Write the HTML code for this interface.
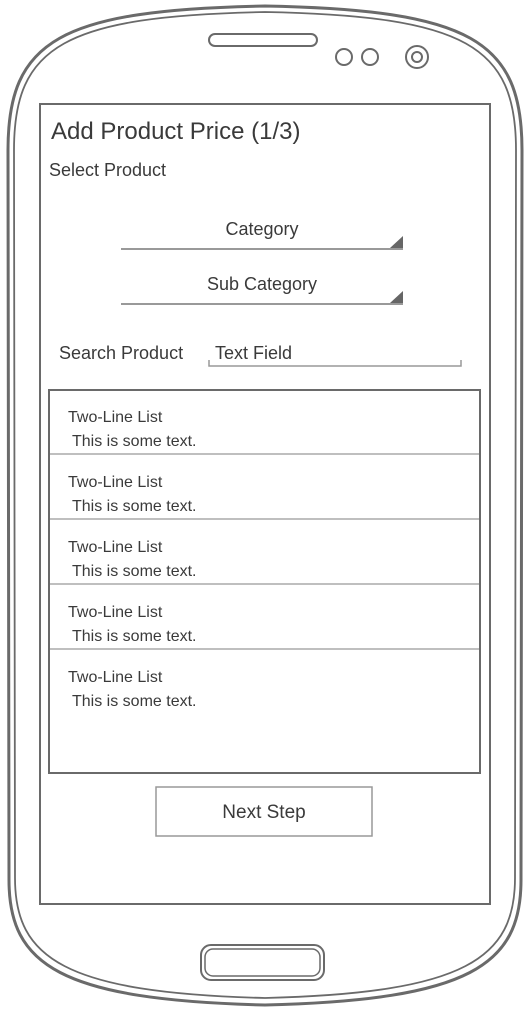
<!DOCTYPE html>
<html><head><meta charset="utf-8"><style>
html,body{margin:0;padding:0;background:#fff;width:530px;height:1010px;overflow:hidden}
svg{display:block}
text{font-family:"Liberation Sans",sans-serif;fill:#3a3a3a}
</style></head><body>
<svg width="530" height="1010" viewBox="0 0 530 1010" xmlns="http://www.w3.org/2000/svg">
<g fill="none" stroke="#6a6a6a">
<path stroke-width="3" d="M8 150 C8 40 60 10 265 6 C470 10 522 40 522 150 L521 880 C521 965 470 1000 265 1005 C60 1000 9 965 9 880 Z"/>
<path stroke-width="1.8" d="M14 150 C14 46 64 16 265 12 C466 16 516 46 516 150 L515 878 C515 958 466 993 265 998 C64 993 15 958 15 878 Z"/>
<rect x="209" y="34" width="108" height="12" rx="6" stroke-width="2"/>
<circle cx="344" cy="57" r="8" stroke-width="2"/>
<circle cx="370" cy="57" r="8" stroke-width="2"/>
<circle cx="417" cy="57" r="11" stroke-width="2"/>
<circle cx="417" cy="57" r="5" stroke-width="2"/>
<rect x="201" y="945" width="123" height="35" rx="10" stroke-width="2"/>
<rect x="205" y="949" width="115" height="27" rx="8" stroke-width="1.5"/>
<rect x="40" y="104" width="450" height="800" stroke-width="2"/>
<line x1="121" y1="249" x2="403" y2="249" stroke="#999" stroke-width="2"/>
<line x1="121" y1="304" x2="403" y2="304" stroke="#999" stroke-width="2"/>
<path d="M209 360 L209 366 L461 366 L461 360" stroke="#999" stroke-width="1.5"/>
<rect x="49" y="390" width="431" height="383" stroke-width="2"/>
<g stroke="#aaa" stroke-width="1.5">
<line x1="50" y1="454" x2="479" y2="454"/>
<line x1="50" y1="519" x2="479" y2="519"/>
<line x1="50" y1="584" x2="479" y2="584"/>
<line x1="50" y1="649" x2="479" y2="649"/>
</g>
<rect x="156" y="787" width="216" height="49" stroke="#999" stroke-width="1.5"/>
</g>
<path d="M390 248 L403 236 L403 248 Z" fill="#666"/>
<path d="M390 303 L403 291 L403 303 Z" fill="#666"/>
<text x="51" y="139" font-size="24">Add Product Price (1/3)</text>
<text x="49" y="176" font-size="18">Select Product</text>
<text x="262" y="235" font-size="18" text-anchor="middle">Category</text>
<text x="262" y="290" font-size="18" text-anchor="middle">Sub Category</text>
<text x="59" y="359" font-size="18">Search Product</text>
<text x="215" y="359" font-size="18">Text Field</text>
<g font-size="16">
<text x="68" y="422">Two-Line List</text><text x="72" y="446">This is some text.</text>
<text x="68" y="487">Two-Line List</text><text x="72" y="511">This is some text.</text>
<text x="68" y="552">Two-Line List</text><text x="72" y="576">This is some text.</text>
<text x="68" y="617">Two-Line List</text><text x="72" y="641">This is some text.</text>
<text x="68" y="682">Two-Line List</text><text x="72" y="706">This is some text.</text>
</g>
<text x="264" y="818" font-size="19" text-anchor="middle">Next Step</text>
</svg>
</body></html>
